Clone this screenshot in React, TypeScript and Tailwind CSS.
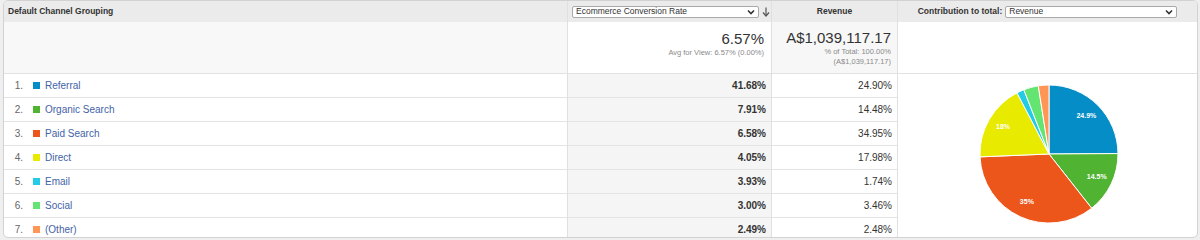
import React from "react";

type Row = { n: number; label: string; color: string; cr: string; rev: string; v: number };

const rows: Row[] = [
  { n: 1, label: "Referral", color: "#058dc7", cr: "41.68%", rev: "24.90%", v: 24.9 },
  { n: 2, label: "Organic Search", color: "#50b432", cr: "7.91%", rev: "14.48%", v: 14.48 },
  { n: 3, label: "Paid Search", color: "#ed561b", cr: "6.58%", rev: "34.95%", v: 34.95 },
  { n: 4, label: "Direct", color: "#e8ea00", cr: "4.05%", rev: "17.98%", v: 17.98 },
  { n: 5, label: "Email", color: "#24cbe5", cr: "3.93%", rev: "1.74%", v: 1.74 },
  { n: 6, label: "Social", color: "#64e572", cr: "3.00%", rev: "3.46%", v: 3.46 },
  { n: 7, label: "(Other)", color: "#ff9655", cr: "2.49%", rev: "2.48%", v: 2.48 },
];

const labels: Record<number, string> = { 1: "24.9%", 2: "14.5%", 3: "35%", 4: "18%" };

function Chevron() {
  return (
    <svg width="8" height="6" viewBox="0 0 8 6" className="shrink-0">
      <polyline points="1,1.5 4,4.5 7,1.5" fill="none" stroke="#333" strokeWidth="1.6" />
    </svg>
  );
}

function Pie() {
  const cx = 151;
  const cy = 80;
  const r = 69;
  const total = rows.reduce((s, x) => s + x.v, 0);
  let cum = 0;
  const slices = rows.map((row) => {
    const a0 = -Math.PI / 2 + (cum / total) * Math.PI * 2;
    cum += row.v;
    const a1 = -Math.PI / 2 + (cum / total) * Math.PI * 2;
    const x0 = cx + r * Math.cos(a0);
    const y0 = cy + r * Math.sin(a0);
    const x1 = cx + r * Math.cos(a1);
    const y1 = cy + r * Math.sin(a1);
    const large = a1 - a0 > Math.PI ? 1 : 0;
    const d = `M ${cx} ${cy} L ${x0} ${y0} A ${r} ${r} 0 ${large} 1 ${x1} ${y1} Z`;
    const am = (a0 + a1) / 2;
    const lr = 53;
    return { d, color: row.color, lx: cx + lr * Math.cos(am), ly: cy + lr * Math.sin(am), n: row.n };
  });
  return (
    <svg width="298" height="170" viewBox="0 0 298 170">
      {slices.map((s) => (
        <path key={s.n} d={s.d} fill={s.color} stroke="#ffffff" strokeWidth="1" strokeLinejoin="round" />
      ))}
      {slices.map((s) =>
        labels[s.n] ? (
          <text
            key={"l" + s.n}
            x={s.lx}
            y={s.ly}
            fill="#ffffff"
            fontSize="7"
            fontWeight="bold"
            textAnchor="middle"
            dominantBaseline="middle"
            fontFamily="'Liberation Sans', Arial, sans-serif"
          >
            {labels[s.n]}
          </text>
        ) : null
      )}
    </svg>
  );
}

export default function App() {
  return (
    <div
      className="w-[1200px] h-[240px] bg-[#efefef] pl-[3px] pr-[2px] pb-[2px] overflow-hidden"
      style={{ fontFamily: "'Liberation Sans', Arial, sans-serif" }}
    >
      <div className="h-[238px] rounded-[5px] border border-[#d2d2d2] bg-white overflow-hidden flex text-[#333]">
        {/* Column 1 */}
        <div className="w-[564px] shrink-0 border-r border-[#e0e0e0] flex flex-col">
          <div className="h-[21px] shrink-0 bg-[#ebebeb] flex items-center pl-[4px] text-[8.5px] font-bold text-[#333]">
            Default Channel Grouping
          </div>
          <div className="h-[52px] shrink-0 bg-[#f8f8f8] border-b border-[#e2e2e2]" />
          {rows.map((r) => (
            <div key={r.n} className="h-[24px] shrink-0 border-b border-[#e4e4e4] flex items-center">
              <span className="w-[19px] text-right text-[10px] text-[#666]">{r.n}.</span>
              <span className="w-[7px] h-[7px] ml-[10px]" style={{ backgroundColor: r.color }} />
              <span className="ml-[5px] text-[10px] text-[#4463a6]">{r.label}</span>
            </div>
          ))}
        </div>
        {/* Column 2 */}
        <div className="w-[204px] shrink-0 border-r border-[#e0e0e0] flex flex-col">
          <div className="h-[21px] shrink-0 bg-[#ebebeb] flex items-center pl-[4px] gap-[3px]">
            <div className="w-[187px] h-[12px] bg-white border border-[#a9a9a9] rounded-[2px] flex items-center justify-between pl-[3px] pr-[3px]">
              <span className="text-[8.5px] leading-none text-[#333]">Ecommerce Conversion Rate</span>
              <Chevron />
            </div>
            <svg width="8" height="10" viewBox="0 0 8 10">
              <line x1="4" y1="0.5" x2="4" y2="9" stroke="#555" strokeWidth="1.2" />
              <polyline points="1,5.5 4,9 7,5.5" fill="none" stroke="#555" strokeWidth="1.2" />
            </svg>
          </div>
          <div className="h-[52px] shrink-0 bg-white border-b border-[#e2e2e2] flex flex-col items-end pr-[7px] pt-[7px]">
            <span className="text-[15px] leading-[19px] text-[#333]">6.57%</span>
            <span className="text-[7.5px] leading-[10px] text-[#8a8a8a]">Avg for View: 6.57% (0.00%)</span>
          </div>
          {rows.map((r) => (
            <div
              key={r.n}
              className="h-[24px] shrink-0 bg-[#f5f5f5] border-b border-[#e4e4e4] flex items-center justify-end pr-[5px] text-[10px] font-bold text-[#333]"
            >
              {r.cr}
            </div>
          ))}
        </div>
        {/* Column 3 */}
        <div className="w-[126px] shrink-0 border-r border-[#e0e0e0] flex flex-col">
          <div className="h-[21px] shrink-0 bg-[#ebebeb] flex items-center justify-center text-[8.5px] font-bold text-[#333]">
            Revenue
          </div>
          <div className="h-[52px] shrink-0 bg-[#f7f7f7] border-b border-[#e2e2e2] flex flex-col items-end pr-[6px] pt-[6px]">
            <span className="text-[15px] leading-[19px] text-[#333] whitespace-nowrap">A$1,039,117.17</span>
            <span className="text-[7.5px] leading-[10px] text-[#8a8a8a]">% of Total: 100.00%</span>
            <span className="text-[7.5px] leading-[10px] text-[#8a8a8a]">(A$1,039,117.17)</span>
          </div>
          {rows.map((r) => (
            <div
              key={r.n}
              className="h-[24px] shrink-0 border-b border-[#e4e4e4] flex items-center justify-end pr-[5px] text-[10px] text-[#333]"
            >
              {r.rev}
            </div>
          ))}
        </div>
        {/* Column 4 */}
        <div className="flex-1 flex flex-col">
          <div className="h-[21px] shrink-0 bg-[#ebebeb] flex items-center justify-center gap-[3px]">
            <span className="text-[8.5px] font-bold text-[#333]">Contribution to total:</span>
            <div className="w-[172px] h-[12px] bg-white border border-[#a9a9a9] rounded-[2px] flex items-center justify-between pl-[3px] pr-[3px]">
              <span className="text-[8.5px] leading-none text-[#333]">Revenue</span>
              <Chevron />
            </div>
          </div>
          <div className="h-[52px] shrink-0 bg-white border-b border-[#e2e2e2]" />
          <div className="flex-1 overflow-hidden">
            <Pie />
          </div>
        </div>
      </div>
    </div>
  );
}
